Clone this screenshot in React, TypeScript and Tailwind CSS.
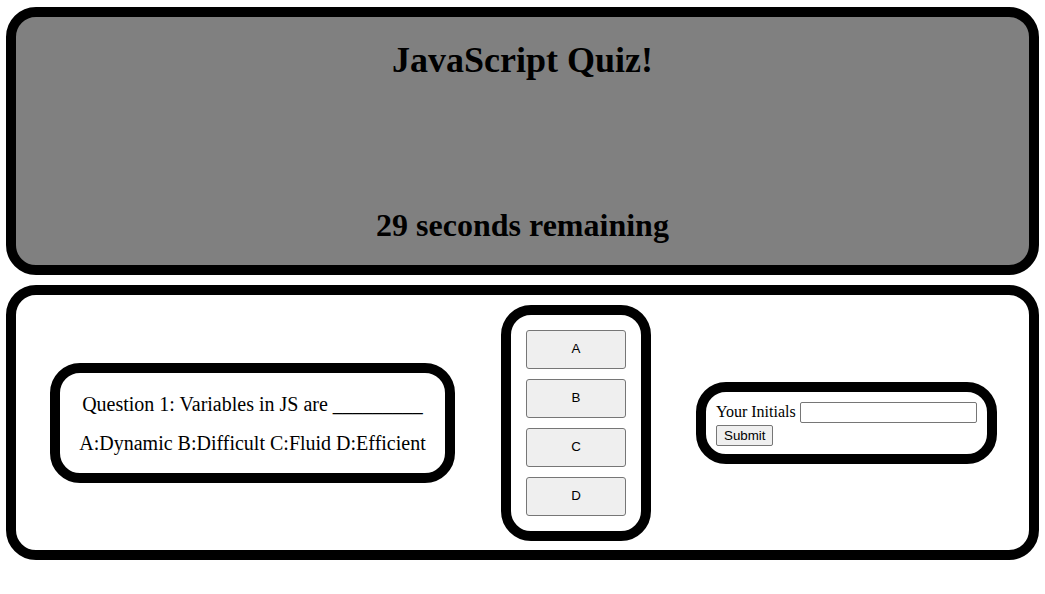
import React from "react";

const serif = "font-['Liberation_Serif','Times_New_Roman',serif]";
const sans = "font-['Liberation_Sans',Arial,sans-serif]";

const choices = ["A", "B", "C", "D"];

const App: React.FC = () => {
  return (
    <div className={`w-full min-h-screen bg-white text-black ${serif} px-[6px] pt-[7px]`}>
      {/* Header */}
      <header className="h-[268px] border-[10px] border-black rounded-[30px] bg-[#808080] flex flex-col items-center justify-between pt-[23px] pb-[21px]">
        <h1 className="text-[36px] leading-[41px] font-bold">JavaScript Quiz!</h1>
        <h2 className="text-[32px] leading-[37px] font-bold">29 seconds remaining</h2>
      </header>

      {/* Quiz body */}
      <main className="mt-[10px] h-[275px] border-[10px] border-black rounded-[30px] flex items-center pl-[34px] gap-[46px]">
        {/* Question */}
        <div className="w-[405px] h-[120px] border-[10px] border-black rounded-[30px] flex flex-col items-center pt-[20px] gap-[16px] text-[20px] leading-[23px]">
          <p>Question 1: Variables in JS are _________</p>
          <p>A:Dynamic B:Difficult C:Fluid D:Efficient</p>
        </div>

        {/* Answer buttons */}
        <div className="w-[150px] h-[236px] border-[10px] border-black rounded-[30px] flex flex-col items-center p-[15px] gap-[10px]">
          {choices.map((c) => (
            <button
              key={c}
              className={`w-[100px] h-[39px] shrink-0 bg-[#efefef] border border-[#767676] rounded-[3px] text-[13.33px] ${sans}`}
            >
              {c}
            </button>
          ))}
        </div>

        {/* Initials */}
        <div className="-ml-px w-[301px] h-[82px] border-[10px] border-black rounded-[30px] p-[10px] text-[16px]">
          <div className="flex items-center h-[21px]">
            <span className="leading-[18px]">Your Initials</span>
            <input
              type="text"
              className="ml-[4px] w-[177px] h-[21px] border border-[#767676] rounded-[2px] bg-white"
            />
          </div>
          <button
            className={`h-[21px] px-[7px] bg-[#efefef] border border-[#767676] rounded-[2px] text-[13.33px] leading-[15px] ${sans}`}
          >
            Submit
          </button>
        </div>
      </main>
    </div>
  );
};

export default App;
